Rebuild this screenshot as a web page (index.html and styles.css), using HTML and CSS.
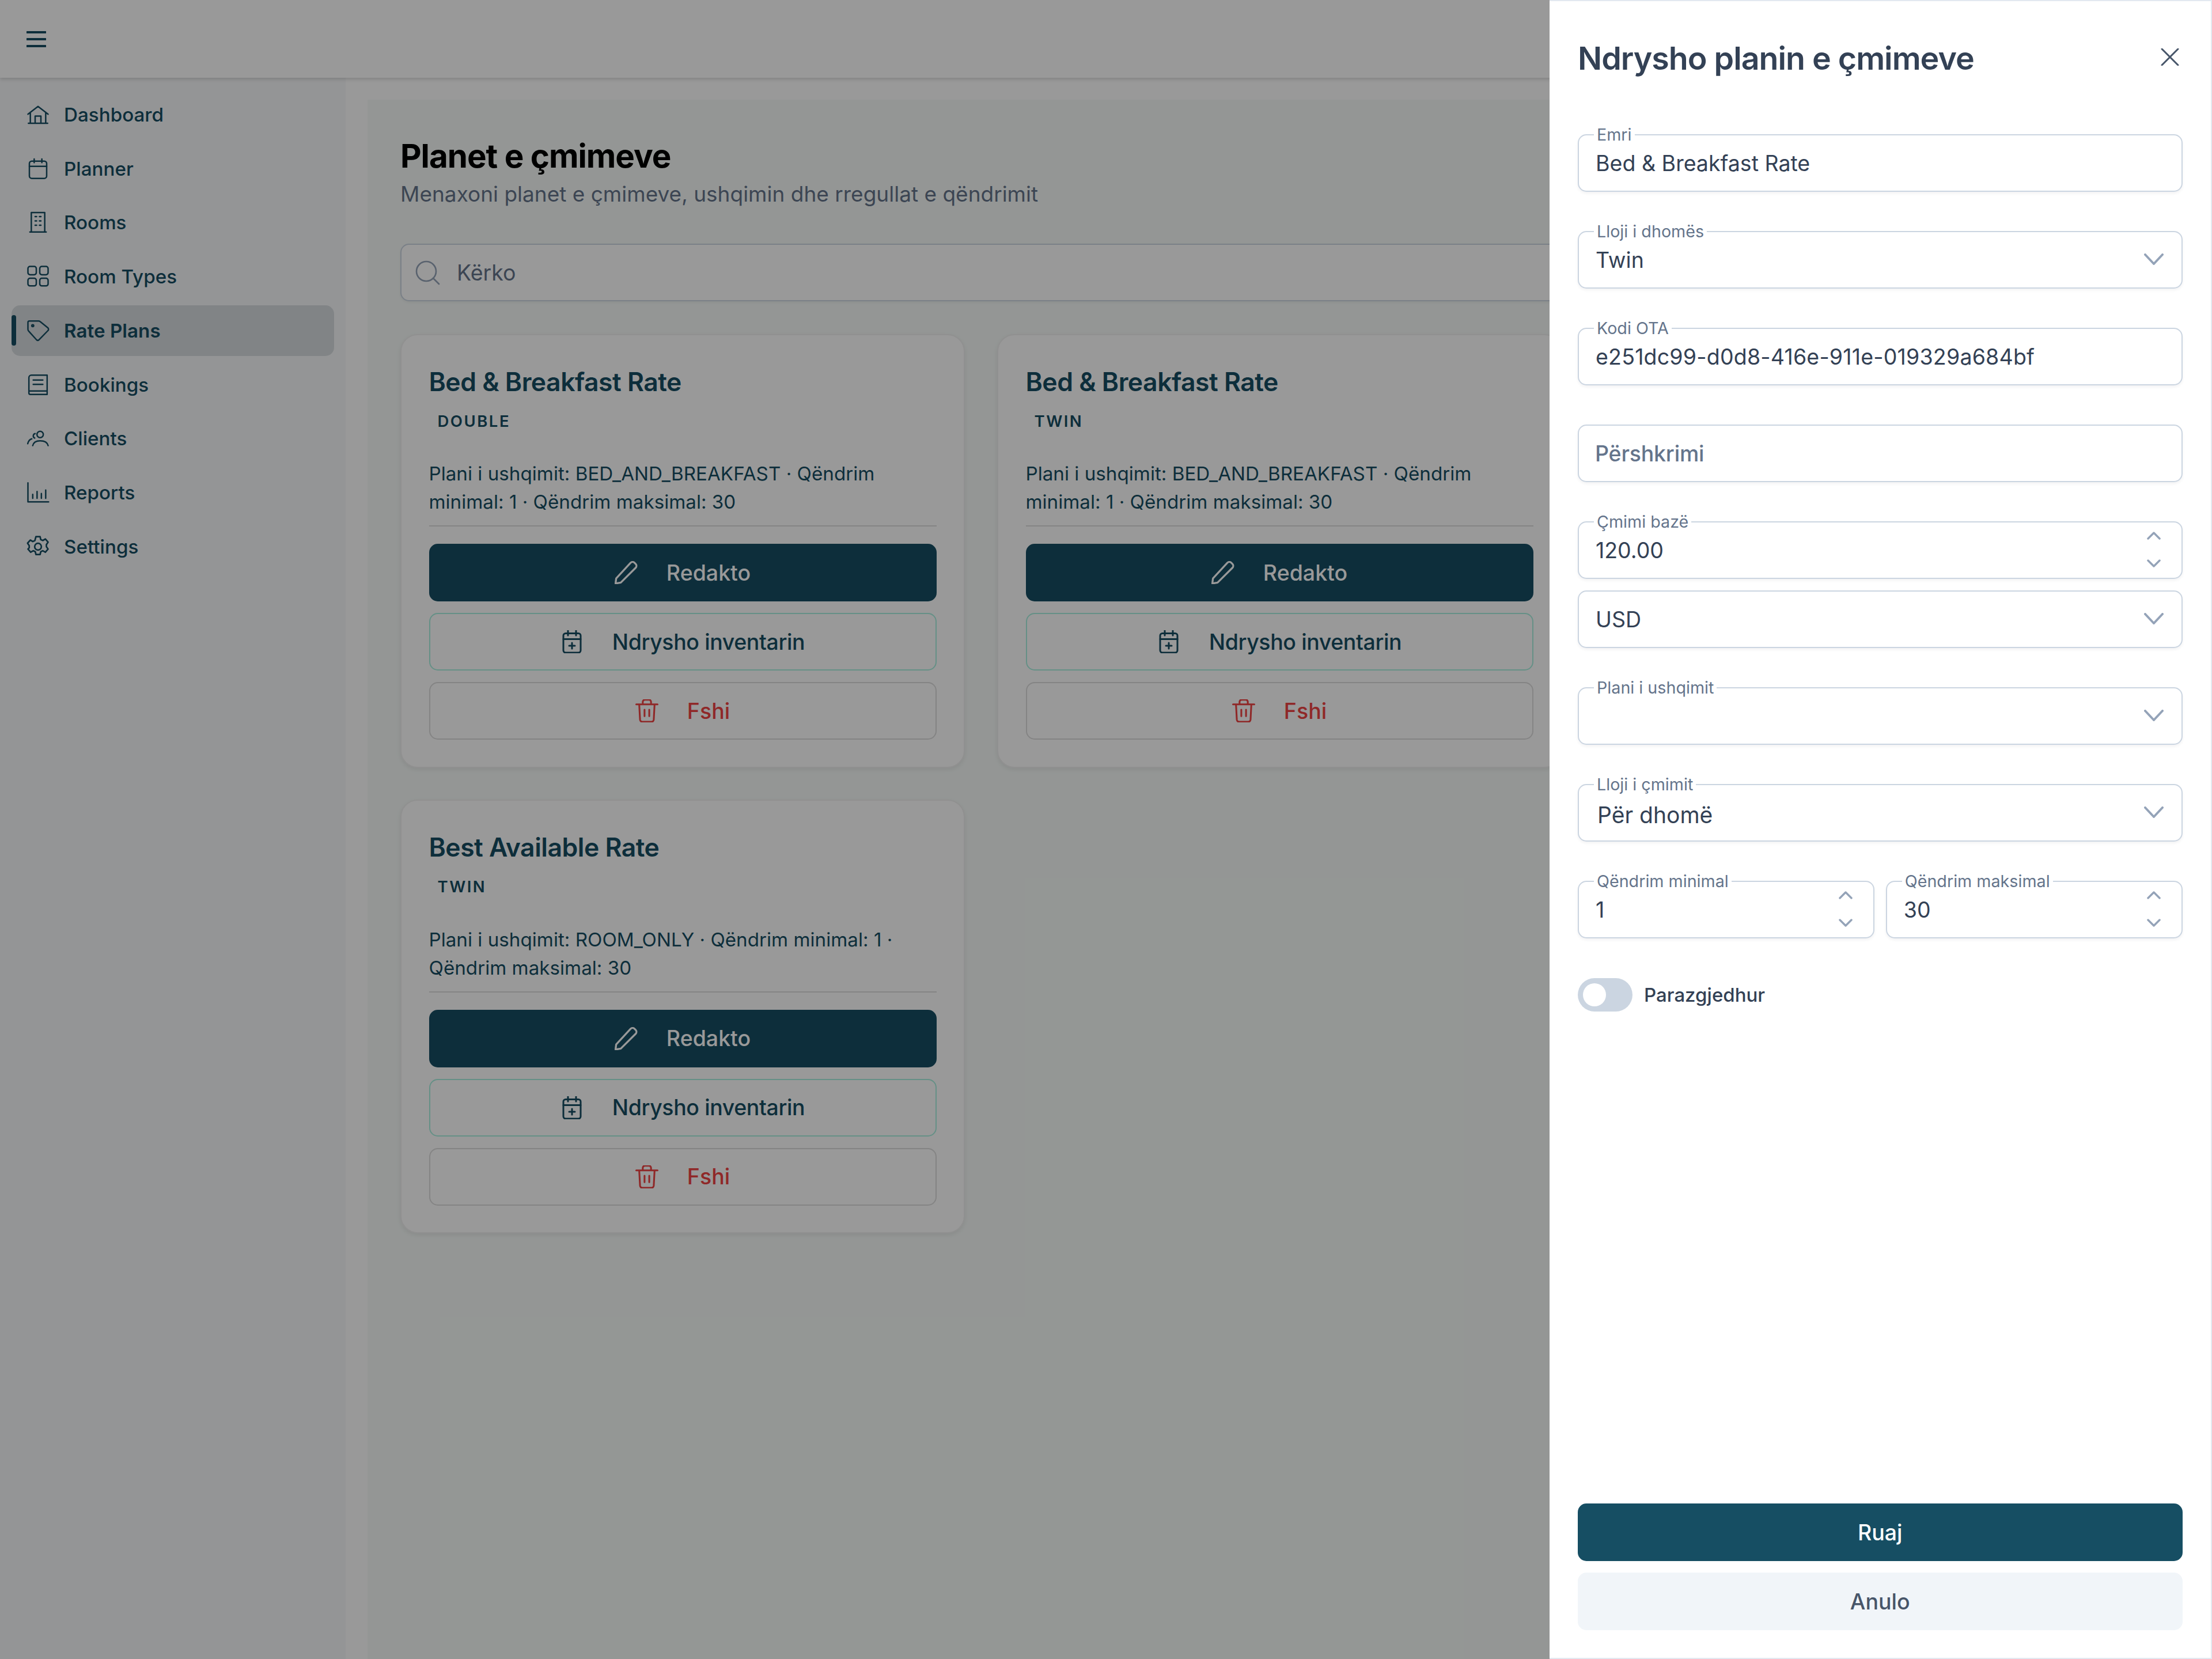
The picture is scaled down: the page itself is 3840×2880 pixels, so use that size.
FILE: index.html
```html
<!DOCTYPE html>
<html lang="sq">
<head>
<meta charset="utf-8">
<title>Planet e çmimeve</title>
<link rel="stylesheet" href="styles.css">
</head>
<body>
<svg class="sprite" width="0" height="0" aria-hidden="true">
  <symbol id="i-pencil" viewBox="3.500 2.500 18 18"><path d="M4.200 20l.5-3.900L15.900 3.900a2.200 2.200 0 0 1 3.100-.1l.9.9a2.200 2.200 0 0 1 0 3.100L8.300 19.300 4.200 20z"/></symbol>
  <symbol id="i-cal" viewBox="2 1.750 20 20"><rect x="4.500" y="4.500" width="15" height="16.800" rx="2"/><path d="M8.500 2.200v4M15.500 2.200v4M4.500 9.500h15M12 12.800v5M9.500 15.300h5"/></symbol>
  <symbol id="i-trash" viewBox="2.250 2.250 19.500 19.500"><path d="M3 6.500h18M8.500 6.500V4.400a1.800 1.800 0 0 1 1.800-1.800h3.400a1.800 1.800 0 0 1 1.800 1.800v2.100M5.500 6.500l.7 13a2 2 0 0 0 2 1.800h7.600a2 2 0 0 0 2-1.800l.7-13M10 11v5.500M14 11v5.500"/></symbol>
  <symbol id="i-down" viewBox="0 0 34 20"><path d="M2 2l15 16L32 2"/></symbol>
  <symbol id="i-sdown" viewBox="0 0 24 14"><path d="M2 2l10 10L22 2"/></symbol>
  <symbol id="i-sup" viewBox="0 0 24 14"><path d="M2 12L12 2l10 10"/></symbol>
</svg>

<div class="app">
  <header class="topbar">
    <svg class="burger" viewBox="0 0 34 30"><path d="M1 3h32M1 15h32M1 27h32"/></svg>
  </header>
  <div class="shell">
    <nav class="sidebar">
      <a class="nav-item"><svg viewBox="0 0 24 24"><path d="M1.500 11.500L12 3.500l10.500 8M4 9.500V21h16V9.500M9 21v-7.500h6V21M2 21h20"/></svg><span>Dashboard</span></a>
      <a class="nav-item"><svg viewBox="0 0 24 24"><rect x="3" y="4" width="18" height="18" rx="2.500"/><path d="M3 9.500h18M8 1.800v3.700M16 1.800v3.700"/></svg><span>Planner</span></a>
      <a class="nav-item"><svg viewBox="0 0 24 24"><path d="M5 22V1.800h14V22M3.500 22h17M9 6h1.500M13.500 6H15M9 10.500h1.500M13.500 10.500H15M9 15h1.500M13.500 15H15"/></svg><span>Rooms</span></a>
      <a class="nav-item"><svg viewBox="0 0 24 24"><rect x="1.500" y="1.500" width="8.700" height="8.700" rx="2.200"/><rect x="13.800" y="1.500" width="8.700" height="8.700" rx="2.200"/><rect x="1.500" y="13.800" width="8.700" height="8" rx="2.200"/><rect x="13.800" y="13.800" width="8.700" height="8" rx="2.200"/></svg><span>Room Types</span></a>
      <a class="nav-item active"><svg viewBox="0 0 24 24"><path d="M1.500 3.500A1.500 1.500 0 0 1 3 2h9.500a3 3 0 0 1 1.700.5l8 6.500a2 2 0 0 1 .1 3L13 21.500a1.800 1.800 0 0 1-2.500.1l-8.200-9.100a2.500 2.500 0 0 1-.8-1.800z"/><circle cx="6.500" cy="6.800" r="1"/></svg><span>Rate Plans</span></a>
      <a class="nav-item"><svg viewBox="0 0 24 24"><path d="M21.500 2H5a2.500 2.500 0 0 0-2.500 2.500v16A1.500 1.500 0 0 0 4 22h17.500zM2.500 18.500h19M7 7h10M7 11.500h10"/></svg><span>Bookings</span></a>
      <a class="nav-item"><svg viewBox="0 0 24 24"><circle cx="14.200" cy="8" r="3.300"/><path d="M6.500 19.500c.8-3.500 3.800-5 7.700-5s7.500 1.500 8.300 5M9 7a2.500 2.500 0 0 0-.5 4.700M5.500 12.500c-2 .5-3.500 2.200-4.200 5"/></svg><span>Clients</span></a>
      <a class="nav-item"><svg viewBox="0 0 24 24"><path d="M1.500 2v19.700h21.500M6.500 14v4M11 11v7M15.500 13v5M20 9.500V18"/></svg><span>Reports</span></a>
      <a class="nav-item"><svg viewBox="1 1 22 22"><circle cx="12" cy="12" r="3.200"/><path d="M10 2.500h4l.6 2.700 2 .9 2.400-1.400 2.600 3-1.600 2.300v2l1.600 2.300-2.600 3-2.400-1.400-2 .9-.6 2.700h-4l-.6-2.700-2-.9-2.400 1.400-2.600-3L3.600 13v-2L2 8.700l2.600-3L7 7.100l2-.9z"/></svg><span>Settings</span></a>
    </nav>
    <main class="panel">
      <h1 class="page-title">Planet e çmimeve</h1>
      <p class="page-sub">Menaxoni planet e çmimeve, ushqimin dhe rregullat e qëndrimit</p>
      <div class="search">
        <svg viewBox="0 0 24 24"><circle cx="11" cy="11" r="8.500"/><path d="M17 17l5 5"/></svg>
        <span>Kërko</span>
      </div>
      <div class="cards">
        <article class="card">
          <h2>Bed &amp; Breakfast Rate</h2>
          <span class="badge">DOUBLE</span>
          <p>Plani i ushqimit: BED_AND_BREAKFAST · Qëndrim minimal: 1 · Qëndrim maksimal: 30</p>
          <div class="actions">
            <button class="btn primary"><svg><use href="#i-pencil"/></svg>Redakto</button>
            <button class="btn outline"><svg><use href="#i-cal"/></svg>Ndrysho inventarin</button>
            <button class="btn danger"><svg><use href="#i-trash"/></svg>Fshi</button>
          </div>
        </article>
        <article class="card">
          <h2>Bed &amp; Breakfast Rate</h2>
          <span class="badge">TWIN</span>
          <p>Plani i ushqimit: BED_AND_BREAKFAST · Qëndrim minimal: 1 · Qëndrim maksimal: 30</p>
          <div class="actions">
            <button class="btn primary"><svg><use href="#i-pencil"/></svg>Redakto</button>
            <button class="btn outline"><svg><use href="#i-cal"/></svg>Ndrysho inventarin</button>
            <button class="btn danger"><svg><use href="#i-trash"/></svg>Fshi</button>
          </div>
        </article>
        <article class="card">
          <h2>Best Available Rate</h2>
          <span class="badge">TWIN</span>
          <p>Plani i ushqimit: ROOM_ONLY · Qëndrim minimal: 1 · Qëndrim maksimal: 30</p>
          <div class="actions">
            <button class="btn primary"><svg><use href="#i-pencil"/></svg>Redakto</button>
            <button class="btn outline"><svg><use href="#i-cal"/></svg>Ndrysho inventarin</button>
            <button class="btn danger"><svg><use href="#i-trash"/></svg>Fshi</button>
          </div>
        </article>
      </div>
    </main>
  </div>
</div>

<div class="overlay"></div>

<aside class="drawer">
  <div class="drawer-head">
    <h2>Ndrysho planin e çmimeve</h2>
    <svg class="close" viewBox="0 0 32 30"><path d="M2 1l28 28M30 1L2 29"/></svg>
  </div>
  <form class="form">
    <div class="field"><label>Emri</label><span class="value">Bed &amp; Breakfast Rate</span></div>
    <div class="field gap-top"><label>Lloji i dhomës</label><span class="value">Twin</span><svg class="chev"><use href="#i-down"/></svg></div>
    <div class="field gap-top"><label>Kodi OTA</label><span class="value code">e251dc99-d0d8-416e-911e-019329a684bf</span></div>
    <div class="field gap-top"><span class="value placeholder">Përshkrimi</span></div>
    <div class="field gap-top"><label>Çmimi bazë</label><span class="value">120.00</span><span class="spin"><svg><use href="#i-sup"/></svg><svg><use href="#i-sdown"/></svg></span></div>
    <div class="field"><span class="value">USD</span><svg class="chev"><use href="#i-down"/></svg></div>
    <div class="field gap-top"><label>Plani i ushqimit</label><span class="value"></span><svg class="chev"><use href="#i-down"/></svg></div>
    <div class="field gap-top"><label>Lloji i çmimit</label><span class="value big">Për dhomë</span><svg class="chev"><use href="#i-down"/></svg></div>
    <div class="split gap-top">
      <div class="field"><label>Qëndrim minimal</label><span class="value">1</span><span class="spin"><svg><use href="#i-sup"/></svg><svg><use href="#i-sdown"/></svg></span></div>
      <div class="field"><label>Qëndrim maksimal</label><span class="value">30</span><span class="spin"><svg><use href="#i-sup"/></svg><svg><use href="#i-sdown"/></svg></span></div>
    </div>
    <div class="switch-row">
      <span class="switch"><span class="thumb"></span></span>
      <span class="switch-label">Parazgjedhur</span>
    </div>
  </form>
  <div class="drawer-foot">
    <button class="btn save">Ruaj</button>
    <button class="btn cancel">Anulo</button>
  </div>
</aside>
</body>
</html>
```
FILE: styles.css
```css
* { box-sizing: border-box; }
html, body { margin: 0; padding: 0; }
body {
  position: relative;
  width: 3840px;
  height: 2880px;
  overflow: hidden;
  background: #fff;
  font-family: Inter, "Liberation Sans", sans-serif;
  color: #164e63;
}
.sprite { position: absolute; }
svg { fill: none; stroke: currentColor; stroke-linecap: round; stroke-linejoin: round; }

.app { display: flex; flex-direction: column; height: 2880px; }
.topbar {
  height: 135px;
  flex: none;
  background: #fff;
  display: flex;
  align-items: center;
  padding-left: 46px;
  box-shadow: 0 3px 6px rgba(0,0,0,.14);
  position: relative;
  z-index: 2;
}
.burger { width: 34px; height: 30px; stroke-width: 4; }

.shell { flex: 1; display: flex; min-height: 0; }
.sidebar {
  width: 600px;
  flex: none;
  background: #f7f8fa;
  padding: 20px 20px 0;
  display: flex;
  flex-direction: column;
  gap: 6.250px;
}
.nav-item {
  position: relative;
  height: 87.500px;
  display: flex;
  align-items: center;
  gap: 25px;
  padding-left: 26px;
  border-radius: 15px;
  font-size: 33.200px;
  font-weight: 500;
}
.nav-item svg { width: 40px; height: 40px; stroke-width: 1.500; flex: none; }
.nav-item.active { background: #d8dde0; font-weight: 600; }
.nav-item.active::before {
  content: "";
  position: absolute;
  left: 0;
  top: 17px;
  width: 7.500px;
  height: 53px;
  border-radius: 4px;
  background: #164e63;
}

.panel {
  flex: 1;
  margin: 38px 0 0 38px;
  padding: 62px 57px 0;
  background: #f7fbf9;
  min-width: 0;
}
.page-title { margin: 0; font-size: 56.500px; line-height: 72px; font-weight: 700; color: #000; letter-spacing: -1px; }
.page-sub { margin: 2px 0 0; font-size: 37px; line-height: 56px; color: #64748b; }
.search {
  margin-top: 58px;
  height: 100px;
  display: flex;
  align-items: center;
  gap: 27px;
  padding-left: 21px;
  border: 2.500px solid #cbd5e1;
  border-radius: 15px;
  background: #fff;
  box-shadow: 0 2px 5px rgba(0,0,0,.06);
  font-size: 37.500px;
  color: #64748b;
}
.search svg { width: 48px; height: 48px; stroke-width: 1.300; color: #94a3b8; flex: none; }

.cards { margin-top: 56.500px; display: grid; grid-template-columns: 980px 980px; gap: 55.500px 56px; align-items: start; }
.card {
  background: #fff;
  border: 2.500px solid #f1f1f1;
  border-radius: 30px;
  padding: 51px 47.500px 46.500px;
  box-shadow: 0 3px 8px rgba(0,0,0,.08);
}
.card h2 { margin: 0; font-size: 44.500px; line-height: 60px; font-weight: 600; letter-spacing: -.5px; }
.badge {
  display: block;
  margin: 18px 0 0 15px;
  font-size: 27.500px;
  line-height: 40px;
  font-weight: 600;
  letter-spacing: 2.500px;
}
.card p { margin: 47.500px 0 0; font-size: 33.200px; line-height: 49px; padding-bottom: 16px; border-bottom: 2.500px solid #dcdcdc; }
.actions { margin-top: 30px; display: flex; flex-direction: column; gap: 20px; }

.btn {
  height: 100px;
  width: 100%;
  display: flex;
  align-items: center;
  justify-content: center;
  gap: 50px;
  border-radius: 15px;
  border: 0;
  font-family: inherit;
  font-size: 37.500px;
  font-weight: 500;
  padding: 0;
}
.btn svg { width: 40px; height: 40px; stroke-width: 1.500; flex: none; }
.primary { background: #164e63; color: #fff; }
.outline { background: #fff; color: #164e63; border: 2.500px solid #a8f0e0; letter-spacing: -.4px; }
.danger { background: #fff; color: #ef4444; border: 2.500px solid #dcdcdc; }

.overlay { position: absolute; inset: 0; z-index: 5; background: rgba(0,0,0,.4); }

.drawer {
  position: absolute;
  z-index: 6;
  top: 0;
  right: 0;
  bottom: 0;
  width: 1150px;
  background: #fff;
  border: 2.500px solid #e2e8f0;
  border-left: 0;
  display: flex;
  flex-direction: column;
  padding: 0 49.500px 48px 49px;
}
.drawer-head { display: flex; align-items: center; justify-content: space-between; height: 200px; flex: none; padding-bottom: 4px; }
.drawer-head h2 { margin: 0; font-size: 55.500px; font-weight: 600; color: #334155; letter-spacing: -1px; }
.close { width: 32px; height: 30px; stroke-width: 3; color: #475569; margin: 0 6px 3px 0; }

.form { flex: 1; display: flex; flex-direction: column; gap: 20px; padding-top: 31px; }
.field {
  position: relative;
  height: 100px;
  flex: none;
  display: flex;
  align-items: center;
  padding: 0 29px;
  border: 2.500px solid #cbd5e1;
  border-radius: 15px;
  background: #fff;
  box-shadow: 0 3px 5px rgba(15,23,42,.05);
}
.gap-top { margin-top: 48px; }
.field label {
  position: absolute;
  left: 26px;
  top: -17px;
  padding: 0 5px;
  background: #fff;
  font-size: 28.700px;
  line-height: 32px;
  color: #64748b;
}
.value { font-size: 37.500px; color: #334155; }
.code { letter-spacing: .2px; }
.placeholder { color: #64748b; font-weight: 500; margin-left: -1px; letter-spacing: -.2px; }
.big { font-size: 39px; margin-left: 3px; margin-top: 6px; }
.chev { position: absolute; right: 31px; top: 37px; width: 34px; height: 20px; stroke-width: 4; color: #94a3b8; }
.spin {
  position: absolute;
  right: 36px;
  top: 16px;
  width: 24px;
  height: 62px;
  display: flex;
  flex-direction: column;
  justify-content: space-between;
  color: #94a3b8;
}
.spin svg { width: 24px; height: 14px; stroke-width: 3.500; }
.split { display: grid; grid-template-columns: 1fr 1fr; gap: 20px; }
.switch-row { margin-top: 49px; display: flex; align-items: center; gap: 20px; }
.switch {
  position: relative;
  width: 95px;
  height: 57.500px;
  border-radius: 29px;
  background: #cbd5e1;
}
.thumb {
  position: absolute;
  left: 9px;
  top: 9px;
  width: 40px;
  height: 40px;
  border-radius: 50%;
  background: #fff;
}
.switch-label { font-size: 33px; font-weight: 500; color: #334155; }

.drawer-foot { display: flex; flex-direction: column; gap: 20px; flex: none; }
.save { background: #164e63; color: #fff; }
.cancel { background: #f1f5f9; color: #475569; }
```
